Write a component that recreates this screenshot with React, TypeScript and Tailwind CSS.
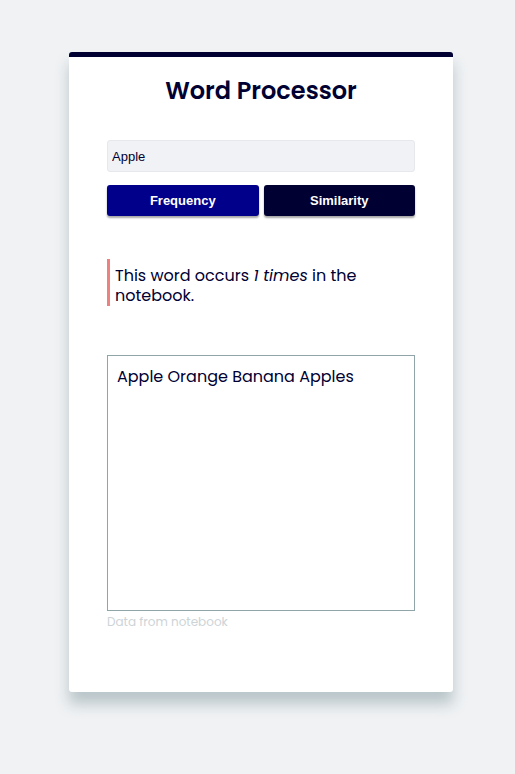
export default function App() {
  return (
    <div className="min-h-screen w-full bg-[#f0f2f4] pt-[52px] font-['Poppins','Open_Sans',sans-serif]">
      <div className="ml-[69px] w-[384px] h-[640px] bg-white rounded-[3px] border-t-[5px] border-[#000033] shadow-[0_12px_14px_rgba(120,145,150,0.45)] px-[38px]">
        <h1 className="text-center text-[24px] font-semibold text-[#000033] mt-[19px] leading-[30px]">
          Word Processor
        </h1>

        <input
          defaultValue="Apple"
          className="mt-[34px] w-full h-[32px] rounded-[3px] bg-[#f0f2f5] border border-[#e6e8eb] px-[4px] text-[13px] text-[#000033] font-['Liberation_Sans',sans-serif] outline-none"
        />

        <div className="mt-[13px] flex gap-[5px]">
          <button className="flex-1 h-[31px] rounded-[3px] bg-[#00008b] text-white text-[13px] font-bold font-['Liberation_Sans',sans-serif] shadow-[0_2px_2px_rgba(0,0,0,0.35)]">
            Frequency
          </button>
          <button className="flex-1 h-[31px] rounded-[3px] bg-[#000033] text-white text-[13px] font-bold font-['Liberation_Sans',sans-serif] shadow-[0_2px_2px_rgba(0,0,0,0.35)]">
            Similarity
          </button>
        </div>

        <div className="mt-[43px] border-l-[3px] border-[#f08080] pl-[5px] pt-[7px] pb-0 text-[16px] leading-[20px] text-[#000033]">
          This word occurs <em>1 times</em> in the notebook.
        </div>

        <textarea
          defaultValue="Apple Orange Banana Apples"
          className="mt-[49px] block w-full h-[256px] border border-[#8fa5a8] px-[9px] py-[9px] text-[16px] leading-[24px] text-[#000033] resize-none outline-none"
        />
        <div className="mt-[2px] text-[12px] text-[#cdd4d7]">Data from notebook</div>
      </div>
    </div>
  );
}
